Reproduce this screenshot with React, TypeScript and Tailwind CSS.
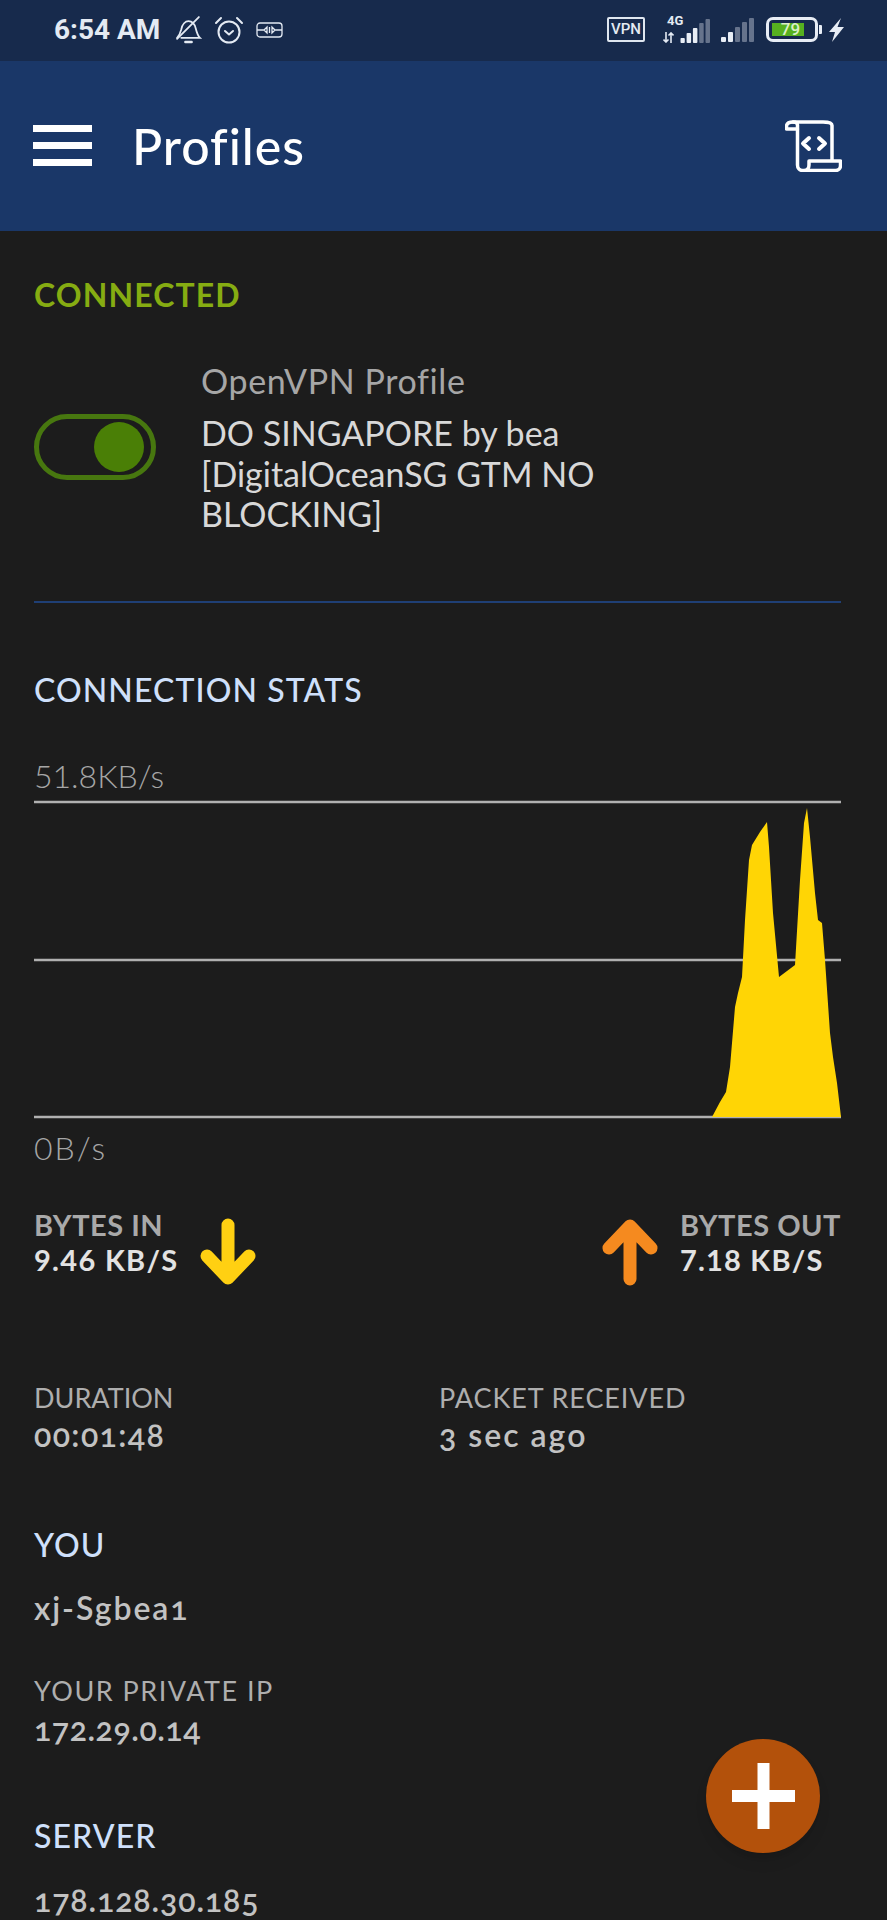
// traced from the reference, chart box starts at (34, 800)
const TRAFFIC: [number, number][] = [
  [678, 317], [686, 302], [692, 292], [696, 267], [701, 207], [704, 193], [708, 177],
  [711, 120], [715, 60], [718, 45], [726, 32], [733, 22], [735, 47], [739, 113],
  [745, 177], [761, 165], [766, 80], [770, 23], [773, 8], [776, 37], [781, 93],
  [784, 120], [788, 123], [791, 160], [796, 233], [799, 257], [803, 283], [807, 317],
];

function Bars({ active }: { active: number }) {
  const bars = [
    { x: 0, h: 5 },
    { x: 7, h: 10 },
    { x: 14, h: 15 },
    { x: 21, h: 20 },
    { x: 28, h: 24 },
  ];
  return (
    <svg width="33" height="24" viewBox="0 0 33 24">
      {bars.map((b, i) => (
        <rect key={b.x} x={b.x} y={24 - b.h} width="5" height={b.h} rx="1" fill={i < active ? "#e8edf5" : "#66738c"} />
      ))}
    </svg>
  );
}

function StatusBar() {
  return (
    <div className="h-[61px] bg-[#172a4c] flex items-center pl-[54px] pr-[42px] pb-[2px] text-[#e4eaf3] font-['Roboto',sans-serif]">
      <span className="text-[28px] font-bold leading-none w-[121px]">6:54 AM</span>
      <svg width="27" height="28" viewBox="0 0 26 27" fill="none" stroke="currentColor" strokeWidth="1.7" strokeLinecap="round">
        <path d="M2 21c2-2 3-4 4-8 1-5 4-8 7-8 4 0 6 3 7 7 1 4 2 7 4 9H6" />
        <path d="M23 1 2 22" />
        <path d="M10 25h6" strokeWidth="2.4" />
      </svg>
      <svg className="ml-[12px]" width="30" height="28" viewBox="0 0 30 28" fill="none" stroke="currentColor" strokeWidth="2" strokeLinecap="round" strokeLinejoin="round">
        <circle cx="15" cy="16" r="10.5" />
        <path d="M11 15l4 3.5 4-3.5" />
        <path d="M2 7l5-5M28 7l-5-5" />
      </svg>
      <svg className="ml-[12px]" width="27" height="16" viewBox="0 0 27 16" fill="none" stroke="currentColor" strokeWidth="1.3">
        <rect x="1" y="1" width="25" height="14" rx="3" />
        <path d="M1 8h7l3-3v6l-3-3M26 8h-7l-3-3v6l3-3M13.500 5v6" />
      </svg>
      <div className="ml-auto flex items-center">
        <span className="w-[38px] h-[25px] border-2 border-[#dfe6f0] rounded-[2px] flex items-center justify-center text-[15px] font-medium leading-none">VPN</span>
        <div className="relative ml-[18px] w-[47px] h-[27px] flex items-end justify-end">
          <span className="absolute left-[4px] -top-[2px] text-[13px] font-bold leading-none">4G</span>
          <svg className="absolute left-0 bottom-0" width="11" height="11" viewBox="0 0 11 11" stroke="currentColor" strokeWidth="1.6" fill="none">
            <path d="M3 0v10M0.500 7.500 3 10l2.500-2.500M8 11V1M5.500 3.500 8 1l2.500 2.500" />
          </svg>
          <div className="scale-x-[0.9] origin-right">
            <Bars active={3} />
          </div>
        </div>
        <div className="ml-[11px]">
          <Bars active={2} />
        </div>
        <div className="ml-[12px] relative w-[52px] h-[25px] border-[3px] border-[#e8edf5] rounded-[7px] p-[3px]">
          <div className="w-[32px] h-full bg-[#56b01f]" />
          <span className="absolute inset-0 flex items-center justify-center text-[17px] font-medium leading-none text-[#dcefc8] pr-[3px]">79</span>
        </div>
        <div className="ml-[1px] w-[3px] h-[9px] bg-[#e8edf5] rounded-r-[1px]" />
        <svg className="ml-[6px]" width="17" height="24" viewBox="0 0 17 24" fill="#e8edf5">
          <path d="M13 0 1 14h6l-3 10L16 9H9.500z" />
        </svg>
      </div>
    </div>
  );
}

function AppBar() {
  return (
    <div className="h-[170px] bg-[#1a3768] flex items-center pl-[33px] pr-[45px] pb-[1px]">
      <div className="w-[59px] flex flex-col gap-[10px]">
        <div className="h-[7px] bg-white" />
        <div className="h-[7px] bg-white" />
        <div className="h-[7px] bg-white" />
      </div>
      <h1 className="ml-[40px] text-[50px] font-medium tracking-[1px] leading-none text-white">Profiles</h1>
      <svg className="ml-auto" width="57" height="52" viewBox="0 0 57 52" fill="none" stroke="white" strokeWidth="3.500" strokeLinecap="round" strokeLinejoin="round">
        <path d="M8 2h30c2 0 9 0 9 3.500V40" />
        <path d="M8 2C4 2 1.500 3.500 1.500 6.500V9h11V5c0-2-2-3-4.500-3z" />
        <path d="M12.500 9v36c0 3 2 5.500 5 5.500h33c3 0 5-2 5-5V41H24v4c0 3-2 5.500-5 5.500" />
        <path d="M24 18l-6 5.500 6 5.500M34 18l6 5.500-6 5.500" strokeWidth="4" />
      </svg>
    </div>
  );
}

function TrafficChart() {
  const points = TRAFFIC.map(([x, y]) => `${x},${y}`).join(" ");
  return (
    <svg className="mt-[4px] block" width="807" height="320" viewBox="0 0 807 320">
      <line x1="0" x2="807" y1="2" y2="2" stroke="#b0b0b0" strokeWidth="2.500" />
      <line x1="0" x2="807" y1="160" y2="160" stroke="#b0b0b0" strokeWidth="2.500" />
      <line x1="0" x2="807" y1="317" y2="317" stroke="#b0b0b0" strokeWidth="2.500" />
      <polygon points={points} fill="#ffd505" />
    </svg>
  );
}

function Arrow({ up, color }: { up?: boolean; color: string }) {
  return (
    <svg className={up ? "rotate-180" : ""} width="56" height="68" viewBox="0 0 56 68" fill="none" stroke={color} strokeWidth="13" strokeLinecap="round" strokeLinejoin="round">
      <path d="M28 7v52M7 38l21 22 21-22" />
    </svg>
  );
}

function Label({ children, className = "" }: { children: string; className?: string }) {
  return <div className={`text-[27px] leading-[36px] text-[#aeaeae] font-normal ${className}`}>{children}</div>;
}

function Value({ children, className = "" }: { children: string; className?: string }) {
  return <div className={`text-[32px] leading-[36px] text-[#c2c2c2] font-semibold oldstyle-nums ${className}`}>{children}</div>;
}

function Heading({ children, className = "" }: { children: string; className?: string }) {
  return <h2 className={`text-[32px] leading-[40px] text-[#cfe0fb] font-medium tracking-[1.100px] ${className}`}>{children}</h2>;
}

export default function App() {
  return (
    <div className="relative w-[887px] h-[1920px] overflow-hidden bg-[#1c1c1c] font-['Lato',sans-serif]">
      <StatusBar />
      <AppBar />

      <main className="pl-[34px] pr-[46px]">
        <div className="mt-[44px] text-[32px] leading-[40px] font-bold tracking-[1.100px] text-[#86ac12]">CONNECTED</div>

        <div className="mt-[46px] flex">
          <div className="relative mt-[53px] w-[122px] h-[66px] rounded-full border-[5px] border-[#47770f]">
            <div className="absolute right-[7px] top-[3px] w-[50px] h-[50px] rounded-full bg-[#4a7f06]" />
          </div>
          <div className="ml-[45px] w-[440px]">
            <div className="text-[34px] leading-[40px] tracking-[0.600px] text-[#a6a6a6]">OpenVPN Profile</div>
            <div className="mt-[12px] text-[34px] leading-[40.500px] text-[#d8d8d8]">
              DO SINGAPORE by bea [DigitalOceanSG GTM NO BLOCKING]
            </div>
          </div>
        </div>

        <div className="mt-[66px] h-[2px] bg-[#1f3f75]" />

        <Heading className="mt-[67px]">CONNECTION STATS</Heading>
        <div className="mt-[46px] text-[32px] leading-[40px] font-light text-[#a6a6a6]">51.8KB/s</div>
        <TrafficChart />
        <div className="mt-[8px] text-[32px] leading-[40px] font-light tracking-[2px] text-[#a6a6a6]">0B/s</div>

        <div className="mt-[39px] h-[80px] flex justify-between">
          <div className="flex">
            <div>
              <div className="text-[29px] leading-[35px] font-bold tracking-[0.500px] text-[#a9a9a9]">BYTES IN</div>
              <div className="text-[29px] leading-[35px] font-bold tracking-[1.300px] text-[#e2e2e2]">9.46 KB/S</div>
            </div>
            <div className="ml-[21px] mt-[11px]">
              <Arrow color="#ffd012" />
            </div>
          </div>
          <div className="flex">
            <div className="mr-[22px] mt-[11px]">
              <Arrow up color="#f58a1f" />
            </div>
            <div>
              <div className="text-[29px] leading-[35px] font-bold tracking-[0.500px] text-[#a9a9a9]">BYTES OUT</div>
              <div className="text-[29px] leading-[35px] font-bold tracking-[1.200px] text-[#e2e2e2]">7.18 KB/S</div>
            </div>
          </div>
        </div>

        <div className="mt-[93px] grid grid-cols-[405px_1fr]">
          <div>
            <Label>DURATION</Label>
            <Value className="mt-[1px] tracking-[1.400px]">00:01:48</Value>
          </div>
          <div>
            <Label className="tracking-[0.900px]">PACKET RECEIVED</Label>
            <Value className="mt-[1px] tracking-[2px]">3 sec ago</Value>
          </div>
        </div>

        <Heading className="mt-[72px]">YOU</Heading>
        <Value className="mt-[25px] tracking-[1.900px]">xj-Sgbea1</Value>
        <Label className="mt-[47px] tracking-[1.500px]">YOUR PRIVATE IP</Label>
        <Value className="mt-[2px] tracking-[0.550px]">172.29.0.14</Value>
        <Heading className="mt-[69px]">SERVER</Heading>
        <Value className="mt-[26px] tracking-[0.900px]">178.128.30.185</Value>
      </main>

      <button className="absolute left-[706px] top-[1739px] w-[114px] h-[114px] rounded-full bg-[#b3510b] flex items-center justify-center shadow-lg">
        <svg width="63" height="66" viewBox="0 0 63 66" fill="white">
          <rect x="0" y="27" width="63" height="12" />
          <rect x="25.500" y="0" width="12" height="66" />
        </svg>
      </button>
    </div>
  );
}
